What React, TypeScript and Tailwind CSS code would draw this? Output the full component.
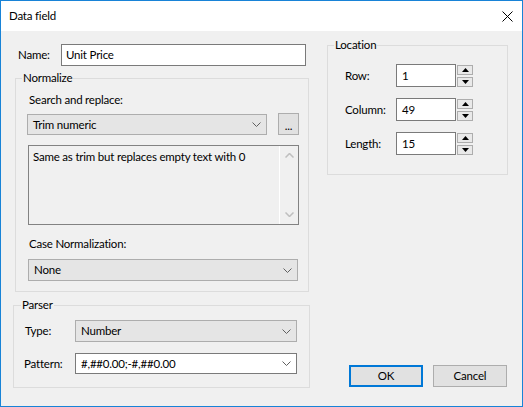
import React from "react";

const Chevron = ({ color = "#606060" }: { color?: string }) => (
  <svg width="9" height="5" viewBox="0 0 9 5" className="block">
    <path d="M0.5 0.5 L4.5 4.5 L8.5 0.5" stroke={color} fill="none" strokeWidth="1" />
  </svg>
);

const Combo = ({
  value,
  className,
  white,
}: {
  value: string;
  className: string;
  white?: boolean;
}) => (
  <div
    className={
      "flex items-center justify-between border pl-[5px] pr-[5px] " +
      (white ? "bg-white border-[#7a7a7a] " : "bg-[#e5e5e5] border-[#adadad] ") +
      className
    }
  >
    <span className="leading-[16px]">{value}</span>
    <Chevron />
  </div>
);

const Spin = () => (
  <div className="ml-[1px] flex w-[16px] flex-col gap-[2px]">
    <div className="flex h-[10px] items-center justify-center border border-[#adadad] bg-[#e9e9e9]">
      <svg width="7" height="4" viewBox="0 0 7 4" className="block">
        <path d="M3.5 0 L7 4 L0 4 Z" fill="#000" />
      </svg>
    </div>
    <div className="flex h-[10px] items-center justify-center border border-[#adadad] bg-[#e9e9e9]">
      <svg width="7" height="4" viewBox="0 0 7 4" className="block">
        <path d="M0 0 L7 0 L3.5 4 Z" fill="#000" />
      </svg>
    </div>
  </div>
);

const SpinRow = ({ label, value, className = "" }: { label: string; value: string; className?: string }) => (
  <div className={"flex h-[23px] items-center " + className}>
    <span className="ml-[17px] w-[51px] leading-[16px]">{label}</span>
    <div className="flex h-[23px] w-[60px] items-center border border-[#7a7a7a] bg-white pl-[5px]">
      <span className="leading-[16px]">{value}</span>
    </div>
    <Spin />
  </div>
);

export default function App() {
  return (
    <div className="flex h-[407px] w-[523px] flex-col border border-[#1883d7] font-['Segoe_UI',Lato,sans-serif] text-[11.5px] tracking-[-0.2px] text-black">
      {/* Title bar */}
      <div className="flex h-[30px] items-center justify-between bg-white pl-[8px] pr-[9px]">
        <span className="leading-[16px]">Data field</span>
        <svg width="11" height="11" viewBox="0 0 11 11" className="block">
          <path d="M0.5 0.5 L10.5 10.5 M10.5 0.5 L0.5 10.5" stroke="#000" strokeWidth="1" fill="none" />
        </svg>
      </div>

      {/* Body */}
      <div className="flex flex-1 bg-[#f0f0f0]">
        {/* Left column */}
        <div className="ml-[12px] flex w-[297px] flex-col pt-[13px]">
          <div className="flex h-[22px] items-center">
            <span className="ml-[5px] w-[43px] leading-[16px]">Name:</span>
            <div className="flex h-[22px] w-[245px] items-center border border-[#7a7a7a] bg-white pl-[4px]">
              <span className="leading-[16px]">Unit Price</span>
            </div>
          </div>

          <fieldset className="ml-[2px] mt-[4px] w-[294px] border border-[#dcdcdc] p-0 pb-[10px]">
            <legend className="ml-[6px] px-[1px] leading-[16px]">Normalize</legend>
            <div className="flex flex-col pt-[6px]">
              <span className="ml-[13px] leading-[16px]">Search and replace:</span>
              <div className="mt-[5px] flex items-end">
                <Combo value="Trim numeric" className="ml-[11px] h-[21px] w-[240px]" />
                <div className="ml-[11px] flex h-[22px] w-[21px] items-end justify-center border border-[#adadad] bg-[#e1e1e1] pb-[2px]">
                  <span className="leading-[12px]">...</span>
                </div>
              </div>
              <div className="ml-[12px] mt-[10px] flex h-[80px] w-[271px] border border-[#828282] bg-[#f0f0f0]">
                <div className="flex-1 pl-[4px] pt-[2px]">
                  <span className="leading-[16px]">Same as trim but replaces empty text with 0</span>
                </div>
                <div className="flex w-[19px] flex-col items-center justify-between border-l border-white py-[7px]">
                  <svg width="9" height="5" viewBox="0 0 9 5" className="block">
                    <path d="M0.5 4.5 L4.5 0.5 L8.5 4.5" stroke="#bfbfbf" fill="none" strokeWidth="1.5" />
                  </svg>
                  <svg width="9" height="5" viewBox="0 0 9 5" className="block">
                    <path d="M0.5 0.5 L4.5 4.5 L8.5 0.5" stroke="#bfbfbf" fill="none" strokeWidth="1.5" />
                  </svg>
                </div>
              </div>
              <span className="ml-[13px] mt-[11px] leading-[16px]">Case Normalization:</span>
              <Combo value="None" className="ml-[12px] mt-[7px] h-[22px] w-[270px]" />
            </div>
          </fieldset>

          <fieldset className="mt-[5px] w-[297px] border border-[#dcdcdc] p-0 pb-[13px]">
            <legend className="ml-[7px] px-[1px] leading-[16px]">Parser</legend>
            <div className="flex flex-col pt-[7px]">
              <div className="flex h-[22px] items-center">
                <span className="ml-[11px] w-[50px] leading-[16px]">Type:</span>
                <Combo value="Number" className="h-[22px] w-[222px]" />
              </div>
              <div className="mt-[11px] flex h-[21px] items-center">
                <span className="ml-[10px] w-[51px] leading-[16px]">Pattern:</span>
                <Combo value="#,##0.00;-#,##0.00" white className="h-[21px] w-[222px]" />
              </div>
            </div>
          </fieldset>
        </div>

        {/* Right column */}
        <div className="ml-[17px] flex w-[181px] flex-col justify-between pb-[19px] pt-[6px]">
          <fieldset className="w-[181px] border border-[#dcdcdc] p-0 pb-[19px]">
            <legend className="ml-[6px] px-[1px] leading-[16px]">Location</legend>
            <div className="flex flex-col pt-[11px]">
              <SpinRow label="Row:" value="1" />
              <SpinRow label="Column:" value="49" className="mt-[11px]" />
              <SpinRow label="Length:" value="15" className="mt-[11px]" />
            </div>
          </fieldset>

          <div className="mr-[1px] flex justify-end gap-[10px]">
            <div className="flex h-[22px] w-[74px] items-center justify-center border-2 border-[#0078d7] bg-[#e1e1e1]">
              <span className="leading-[16px]">OK</span>
            </div>
            <div className="flex h-[22px] w-[74px] items-center justify-center border border-[#adadad] bg-[#e1e1e1]">
              <span className="leading-[16px]">Cancel</span>
            </div>
          </div>
        </div>
      </div>
    </div>
  );
}
